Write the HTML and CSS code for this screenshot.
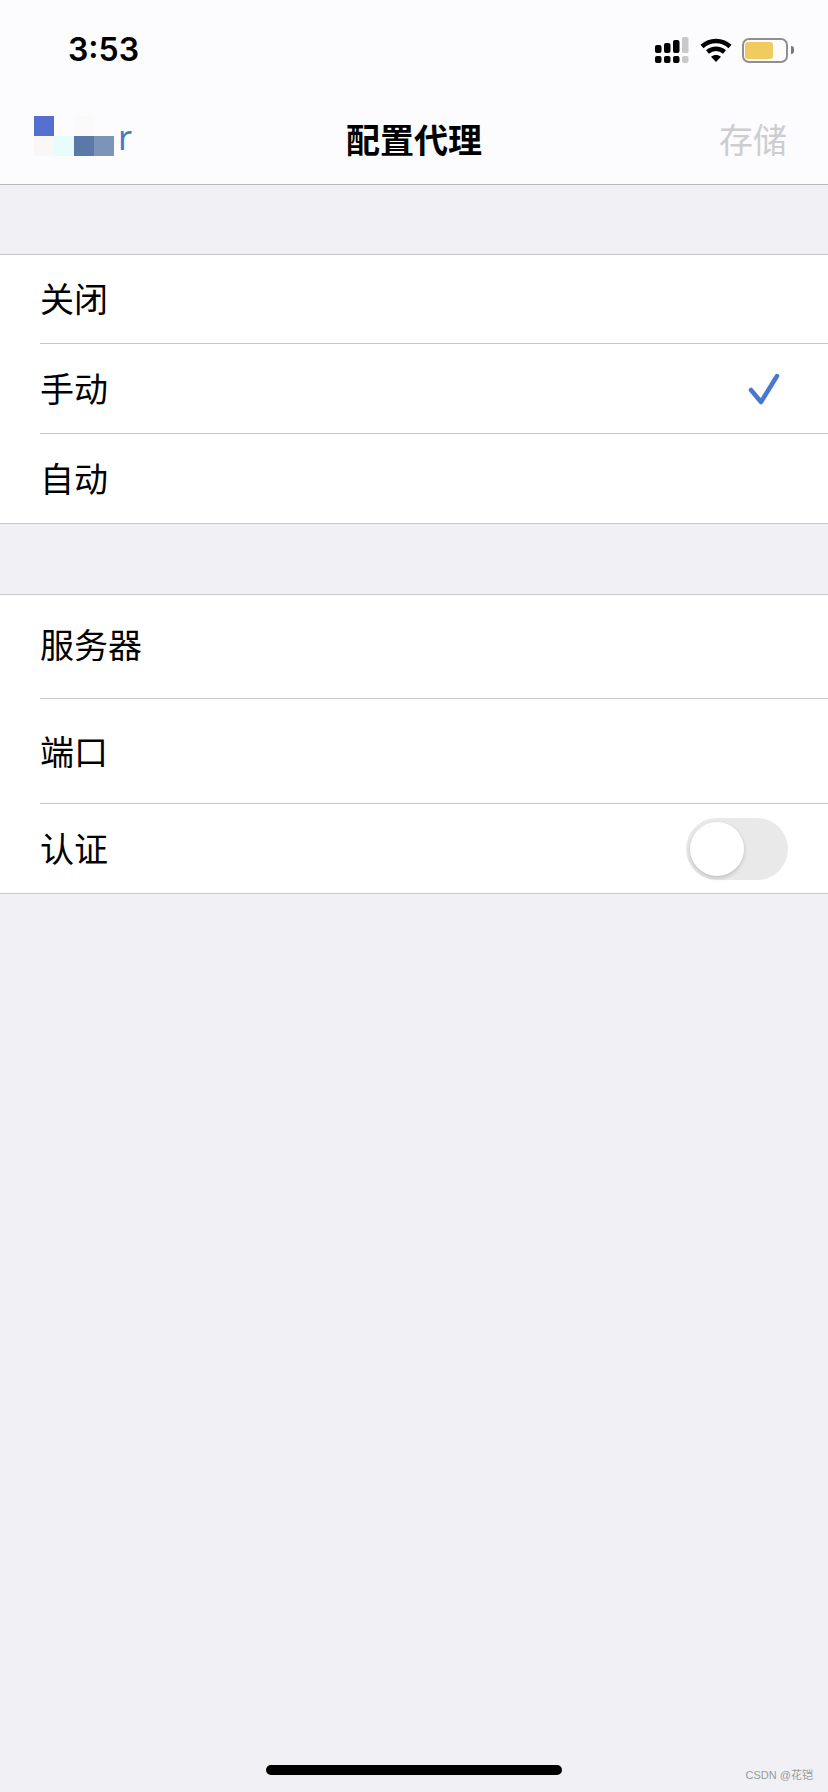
FILE: index.html
```html
<!DOCTYPE html>
<html lang="zh-CN">
<head>
    <meta charset="UTF-8">
    <meta name="viewport" content="width=device-width, initial-scale=1.0">
    <title>配置代理</title>
    <link rel="stylesheet" href="styles.css">
</head>
<body>
    <div class="screen">
        <header class="top-bar">
            <div class="status-bar">
                <span class="time">3:53</span>
                <div class="status-icons">
                    <svg class="signal" width="34" height="26" viewBox="0 0 34 26">
                        <rect x="0" y="8" width="6.500" height="8" rx="2"/>
                        <rect x="9" y="6" width="6.500" height="10" rx="2"/>
                        <rect x="18" y="3" width="6.500" height="13" rx="2"/>
                        <rect class="off" x="27" y="0" width="6.500" height="16" rx="1.500"/>
                        <rect x="0" y="19" width="6.500" height="7" rx="2"/>
                        <rect x="9" y="19" width="6.500" height="7" rx="2"/>
                        <rect x="18" y="19" width="6.500" height="7" rx="2"/>
                        <rect class="off" x="27" y="19" width="6.500" height="7" rx="2"/>
                    </svg>
                    <svg class="wifi" width="32" height="24" viewBox="0 0 32 24">
                        <path d="M2 8.500C10 1.200 22 1.200 30 8.500" fill="none" stroke="#000" stroke-width="4.500"/>
                        <path d="M7.500 14C12.500 9.800 19.500 9.800 24.500 14" fill="none" stroke="#000" stroke-width="4.500"/>
                        <path d="M11 18.800C14 16.400 18 16.400 21 18.800L16 24Z"/>
                    </svg>
                    <div class="battery">
                        <div class="battery-level"></div>
                    </div>
                    <div class="battery-nub"></div>
                </div>
            </div>
            <nav class="nav-bar">
                <a class="back">
                    <!-- mosaic over the blurred back label -->
                    <span class="mosaic">
                        <i class="c1"></i><i></i><i class="c2"></i><i></i>
                        <i class="c3"></i><i class="c4"></i><i class="c5"></i><i class="c6"></i>
                    </span>
                    <span class="back-letter">r</span>
                </a>
                <h1>配置代理</h1>
                <a class="save">存储</a>
            </nav>
        </header>

        <section class="group group-first">
            <div class="row"><span>关闭</span></div>
            <div class="row">
                <span>手动</span>
                <svg class="check" width="32" height="34" viewBox="0 0 32 34">
                    <path d="M3 18L13 30L29 4" fill="none" stroke="#4a78d0" stroke-width="4.500" stroke-linecap="round" stroke-linejoin="round"/>
                </svg>
            </div>
            <div class="row"><span>自动</span></div>
        </section>

        <section class="group group-second">
            <div class="row row-tall"><span>服务器</span></div>
            <div class="row row-tall"><span>端口</span></div>
            <div class="row">
                <span>认证</span>
                <div class="toggle"><div class="knob"></div></div>
            </div>
        </section>

        <div class="home-indicator"></div>
        <div class="watermark">CSDN @花铠</div>
    </div>
</body>
</html>
```

FILE: styles.css
```css
body {
    margin: 0;
    background-color: #f0f0f5;
    font-family: "Noto Sans CJK SC", "Noto Sans", sans-serif;
    color: #000;
}

.screen {
    position: relative;
    height: 1792px;
    overflow: hidden;
}

.top-bar {
    height: 184px;
    background-color: #fcfcfe;
    border-bottom: 1px solid #b9b9bd;
}

.status-bar {
    display: flex;
    justify-content: space-between;
    align-items: center;
    height: 92px;
    padding: 0 34px 0 68px;
}

.time {
    font-family: Inter, "Liberation Sans", sans-serif;
    font-size: 32px;
    font-weight: 600;
    margin-top: 6px;
}

.status-icons {
    display: flex;
    align-items: center;
    margin-top: 8px;
}

.signal {
    margin-right: 11px;
}

.signal .off {
    fill: #c9c9c9;
}

.wifi {
    margin-right: 10px;
}

.battery {
    box-sizing: border-box;
    width: 46px;
    height: 25px;
    padding: 2px 1px;
    border: 2px solid #8f8f8f;
    border-radius: 7px;
}

.battery-level {
    width: 28px;
    height: 100%;
    background-color: #f0cb5f;
    border-radius: 3px;
}

.battery-nub {
    width: 3px;
    height: 8px;
    margin-left: 3px;
    background-color: #777;
    border-radius: 0 3px 3px 0;
}

.nav-bar {
    display: flex;
    justify-content: space-between;
    align-items: center;
    height: 92px;
    padding: 0 41px 0 34px;
}

.nav-bar h1 {
    position: absolute;
    top: 93px;
    left: 0;
    right: 0;
    margin: 0;
    text-align: center;
    font-size: 34px;
    font-weight: 700;
    line-height: 92px;
    pointer-events: none;
}

.back {
    display: flex;
    align-items: flex-end;
    height: 40px;
    margin-top: -4px;
}

.mosaic {
    display: grid;
    grid-template-columns: repeat(4, 20px);
    grid-template-rows: repeat(2, 20px);
}

.mosaic .c1 { background-color: #5470cf; }
.mosaic .c2 { background-color: #fafafb; }
.mosaic .c3 { background-color: #faf7f6; }
.mosaic .c4 { background-color: #e8fbfd; }
.mosaic .c5 { background-color: #5b79a8; }
.mosaic .c6 { background-color: #7b94b8; }

.back-letter {
    color: #4a78c8;
    font-family: "Noto Sans", sans-serif;
    font-size: 34px;
    line-height: 40px;
    margin-left: 4px;
    margin-bottom: -1px;
}

.save {
    color: #cdcdd0;
    font-size: 34px;
    line-height: 92px;
    padding-top: 2px;
}

.group {
    background-color: #fff;
    border-top: 1px solid #c8c8cc;
    border-bottom: 1px solid #c8c8cc;
}

.group-first {
    margin-top: 69px;
}

.group-second {
    margin-top: 70px;
}

.row {
    display: flex;
    justify-content: space-between;
    align-items: center;
    height: 89px;
    margin-left: 40px;
    padding-right: 40px;
    font-size: 34px;
    border-bottom: 1px solid #c8c8cc;
}

.row span {
    margin-bottom: 2px;
}

.row:last-child {
    border-bottom: none;
}

.row-tall {
    height: 104px;
}

.group-first .row:first-child {
    height: 88px;
}

.group-first .row:first-child span {
    margin-bottom: 3px;
}

.group-second .row:first-child {
    height: 103px;
}

.group-second .row:first-child span {
    margin-bottom: 6px;
}

.check {
    margin-right: 8px;
}

.toggle {
    box-sizing: border-box;
    width: 102px;
    height: 62px;
    padding: 4px;
    background-color: #e9e9ea;
    border-radius: 31px;
}

.knob {
    width: 54px;
    height: 54px;
    background-color: #fff;
    border-radius: 50%;
    box-shadow: 0 2px 4px rgba(0, 0, 0, 0.18);
}

.home-indicator {
    position: absolute;
    left: 266px;
    bottom: 17px;
    width: 296px;
    height: 10px;
    background-color: #000;
    border-radius: 5px;
}

.watermark {
    position: absolute;
    right: 15px;
    bottom: 10px;
    font-family: "Liberation Sans", "Noto Sans CJK SC", sans-serif;
    font-size: 11px;
    color: #9a9a9e;
}
```
